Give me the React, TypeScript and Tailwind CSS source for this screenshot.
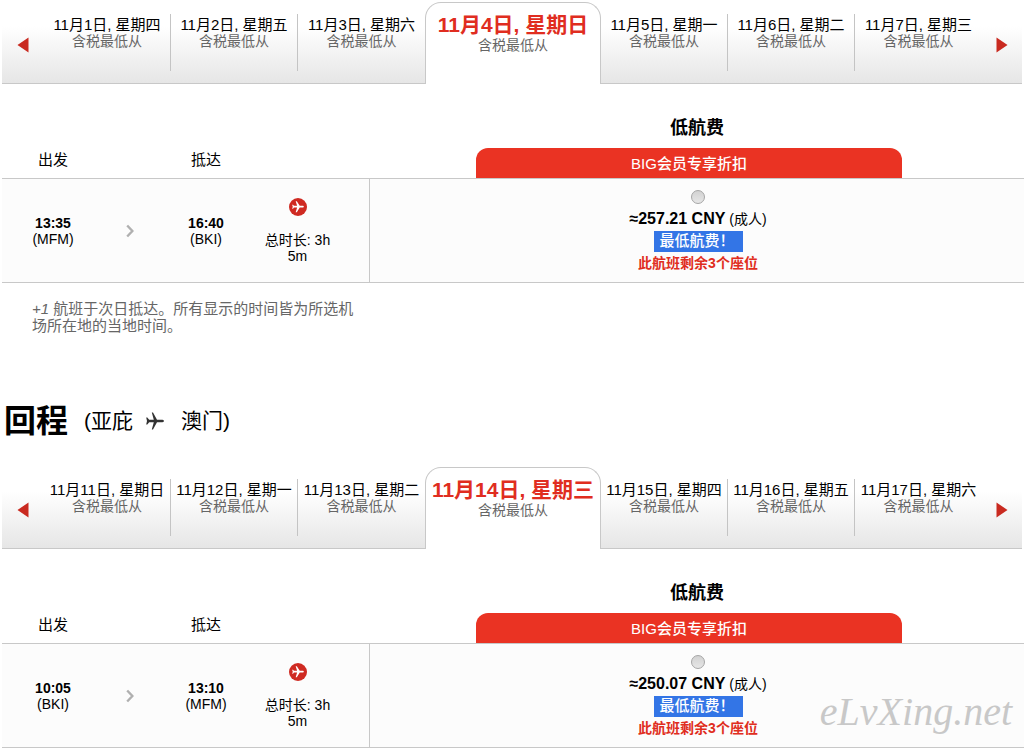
import { MdFlight } from "react-icons/md";

const OUTBOUND_DAYS = [
  "11月1日, 星期四",
  "11月2日, 星期五",
  "11月3日, 星期六",
  "11月4日, 星期日",
  "11月5日, 星期一",
  "11月6日, 星期二",
  "11月7日, 星期三",
];

const RETURN_DAYS = [
  "11月11日, 星期日",
  "11月12日, 星期一",
  "11月13日, 星期二",
  "11月14日, 星期三",
  "11月15日, 星期四",
  "11月16日, 星期五",
  "11月17日, 星期六",
];

const SELECTED = 3;

type Flight = {
  id: string;
  departs: string;
  from: string;
  arrives: string;
  to: string;
  duration: string;
  price: string;
};

const OUTBOUND: Flight = {
  id: "outbound",
  departs: "13:35",
  from: "MFM",
  arrives: "16:40",
  to: "BKI",
  duration: "3h 5m",
  price: "257.21",
};

const RETURN: Flight = {
  id: "return",
  departs: "10:05",
  from: "BKI",
  arrives: "13:10",
  to: "MFM",
  duration: "3h 5m",
  price: "250.07",
};

function ArrowButton({ direction }: { direction: "prev" | "next" }) {
  return (
    <button
      type="button"
      aria-label={direction === "prev" ? "前一周" : "后一周"}
      className="flex items-center justify-center border-b border-[#c8c8c8] bg-linear-to-b from-white from-30% to-[#e6e6e6] pt-1"
    >
      <svg viewBox="0 0 12 16" className="h-4 w-3" fill="#c92a20">
        {direction === "prev" ? (
          <path d="M11.5 0.5v15L0.5 8z" />
        ) : (
          <path d="M0.5 0.5v15L11.5 8z" />
        )}
      </svg>
    </button>
  );
}

function DateStrip({ days }: { days: string[] }) {
  return (
    <nav className="mr-0.5 grid h-[82px] grid-cols-[42px_repeat(3,1fr)_176px_repeat(3,1fr)_40px]">
      <ArrowButton direction="prev" />
      {days.map((day, i) =>
        i === SELECTED ? (
          <button
            key={day}
            type="button"
            aria-current="date"
            className="flex flex-col items-center rounded-t-2xl border-x border-t border-[#c8c8c8] bg-white pt-2.5 whitespace-nowrap"
          >
            <span className="text-[21px] leading-6 font-bold text-[#e02d20]">{day}</span>
            <span className="text-sm leading-4 text-[#666]">含税最低从</span>
          </button>
        ) : (
          <button
            key={day}
            type="button"
            className="border-b border-[#c8c8c8] bg-linear-to-b from-white from-30% to-[#e6e6e6] py-3 whitespace-nowrap"
          >
            <span
              className={
                i === 2 || i === 6
                  ? "flex h-full flex-col items-center pt-[3px]"
                  : "flex h-full flex-col items-center border-r border-[#c4c4c4] pt-[3px]"
              }
            >
              <span className="text-[15px] leading-4 text-black">{day}</span>
              <span className="text-sm leading-4 text-[#666]">含税最低从</span>
            </span>
          </button>
        ),
      )}
      <ArrowButton direction="next" />
    </nav>
  );
}

function FlightTable({ flight }: { flight: Flight }) {
  return (
    <table className="w-full table-fixed border-separate border-spacing-0 text-center text-sm leading-4">
      <colgroup>
        <col className="w-[102px]" />
        <col className="w-[52px]" />
        <col className="w-[100px]" />
        <col className="w-[114px]" />
        <col />
      </colgroup>
      <thead>
        <tr>
          <th className="pb-2.5 align-bottom text-[15px] leading-4 font-normal">出发</th>
          <td />
          <th className="pb-2.5 align-bottom text-[15px] leading-4 font-normal">抵达</th>
          <td />
          <th className="pt-8 align-bottom">
            <div className="text-lg leading-6 font-bold">低航费</div>
            <div className="mt-2 pr-4">
              <div className="mx-auto h-[30px] w-2/3 rounded-t-xl bg-[#ea3323] text-[15px] leading-8 font-medium text-white">
                BIG会员专享折扣
              </div>
            </div>
          </th>
        </tr>
      </thead>
      <tbody>
        <tr className="h-[105px] *:border-y *:border-[#c8c8c8] *:bg-[#fcfcfc]">
          <td>
            <div className="font-bold">{flight.departs}</div>
            <div>({flight.from})</div>
          </td>
          <td>
            <svg viewBox="0 0 8 14" className="mx-auto h-3.5 w-2" fill="none" stroke="#b0b0b0" strokeWidth="2.4">
              <path d="M1.2 1.5L6.4 7L1.2 12.5" />
            </svg>
          </td>
          <td>
            <div className="font-bold">{flight.arrives}</div>
            <div>({flight.to})</div>
          </td>
          <td className="border-r pr-[30px]">
            <div className="mx-auto mb-4 flex size-[18px] items-center justify-center rounded-full bg-[#cf2a22]">
              <MdFlight className="size-3.5 rotate-90 text-white" />
            </div>
            {`总时长: ${flight.duration}`}
          </td>
          <td className="pl-0.5">
            <input
              id={flight.id}
              name={flight.id}
              type="radio"
              className="mx-auto block size-3.5 appearance-none rounded-full border border-[#a5a5a5] bg-linear-to-b from-[#d2d2d2] to-[#e6e6e6]"
            />
            <label htmlFor={flight.id} className="mt-[5px] block leading-5">
              <span className="text-base leading-5 font-bold">{`≈${flight.price} CNY`}</span> (成人)
            </label>
            <div className="mx-auto mt-0.5 h-[21px] w-[89px] bg-[#3375e6] pl-1.5 text-left text-[15px] leading-5 font-medium text-white">
              最低航费！
            </div>
            <div className="mt-0.5 leading-[18px] font-bold text-[#e02d20]">此航班剩余3个座位</div>
          </td>
        </tr>
      </tbody>
    </table>
  );
}

export default function App() {
  return (
    <main className="relative overflow-hidden bg-white pt-0.5 pl-0.5 font-['Liberation_Sans','Noto_Sans_CJK_SC',sans-serif] text-black">
      <section>
        <DateStrip days={OUTBOUND_DAYS} />
        <FlightTable flight={OUTBOUND} />
        <p className="ml-[30px] w-[332px] pt-[17px] text-[15px] leading-[17px] text-[#666]">
          <em>+1</em> 航班于次日抵达。所有显示的时间皆为所选机场所在地的当地时间。
        </p>
      </section>

      <section className="mt-[67px]">
        <div className="mb-[26px] flex h-10 items-center">
          <h2 className="ml-0.5 text-[32px] leading-10 font-bold">回程</h2>
          <p className="ml-4 flex items-center text-[21px] leading-10">
            (亚庇
            <svg viewBox="0 0 20 20" className="mr-4 ml-3 size-5" fill="#333">
              <path d="M19 10c0-.9-1.200-1.300-2.600-1.300H12L8 1.500H6.800L8.800 8.700H4.200L2.300 6.500H1.200L2 10l-.8 3.500h1.100l1.900-2.200h4.600l-2 7.200H8l4-7.200h4.400c1.400 0 2.600-.4 2.600-1.300z" />
            </svg>
            澳门)
          </p>
        </div>
        <DateStrip days={RETURN_DAYS} />
        <FlightTable flight={RETURN} />
      </section>

      <div className="pointer-events-none absolute right-3 bottom-3 font-['Liberation_Serif',serif] text-[40px] leading-12 text-[#c8c8c8] italic">
        eLvXing.net
      </div>
    </main>
  );
}
